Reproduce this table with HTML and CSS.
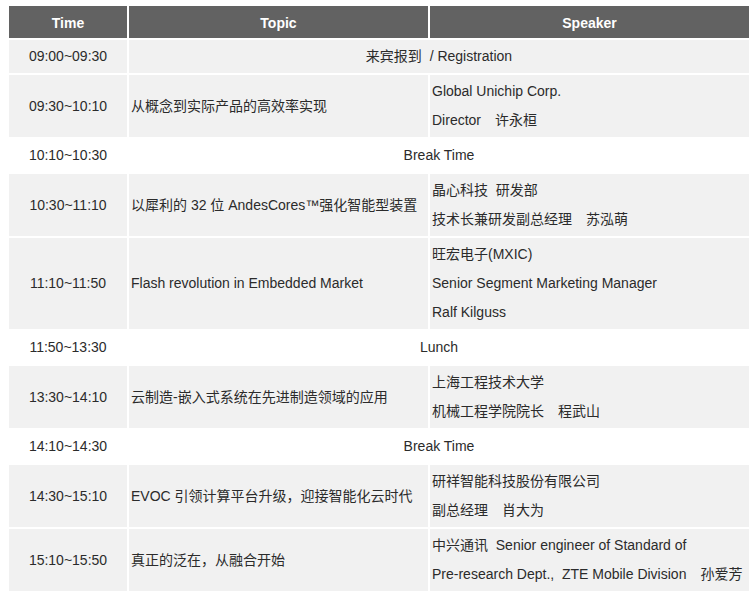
FILE: index.html
```html
<!DOCTYPE html>
<html lang="zh">
<head>
<meta charset="utf-8">
<title>Agenda</title>
<link rel="stylesheet" href="styles.css">
</head>
<body>
<table class="agenda">
  <colgroup>
    <col class="c-time">
    <col class="c-topic">
    <col class="c-speaker">
  </colgroup>
  <thead>
    <tr><th>Time</th><th>Topic</th><th>Speaker</th></tr>
  </thead>
  <tbody>
    <tr class="row">
      <td class="time">09:00~09:30</td>
      <td class="wide" colspan="2"><div class="ln">来宾报到&nbsp; / Registration</div></td>
    </tr>
    <tr class="row">
      <td class="time">09:30~10:10</td>
      <td class="topic">从概念到实际产品的高效率实现</td>
      <td class="speaker"><div class="ln">Global Unichip Corp.</div><div class="ln">Director　许永桓</div></td>
    </tr>
    <tr class="brk">
      <td class="time">10:10~10:30</td>
      <td class="wide" colspan="2">Break Time</td>
    </tr>
    <tr class="row">
      <td class="time">10:30~11:10</td>
      <td class="topic">以犀利的 32 位 AndesCores™强化智能型装置</td>
      <td class="speaker"><div class="ln">晶心科技&nbsp; 研发部</div><div class="ln">技术长兼研发副总经理　苏泓萌</div></td>
    </tr>
    <tr class="row">
      <td class="time">11:10~11:50</td>
      <td class="topic">Flash revolution in Embedded Market</td>
      <td class="speaker"><div class="ln">旺宏电子(MXIC)</div><div class="ln">Senior Segment Marketing Manager</div><div class="ln">Ralf Kilguss</div></td>
    </tr>
    <tr class="brk">
      <td class="time">11:50~13:30</td>
      <td class="wide" colspan="2">Lunch</td>
    </tr>
    <tr class="row">
      <td class="time">13:30~14:10</td>
      <td class="topic">云制造-嵌入式系统在先进制造领域的应用</td>
      <td class="speaker"><div class="ln">上海工程技术大学</div><div class="ln">机械工程学院院长　程武山</div></td>
    </tr>
    <tr class="brk">
      <td class="time">14:10~14:30</td>
      <td class="wide" colspan="2">Break Time</td>
    </tr>
    <tr class="row">
      <td class="time">14:30~15:10</td>
      <td class="topic">EVOC 引领计算平台升级，迎接智能化云时代</td>
      <td class="speaker"><div class="ln">研祥智能科技股份有限公司</div><div class="ln">副总经理　肖大为</div></td>
    </tr>
    <tr class="row">
      <td class="time">15:10~15:50</td>
      <td class="topic">真正的泛在，从融合开始</td>
      <td class="speaker"><div class="ln">中兴通讯&nbsp; Senior engineer of Standard of</div><div class="ln">Pre-research Dept.,&nbsp; ZTE Mobile Division　孙爱芳</div></td>
    </tr>
  </tbody>
</table>
</body>
</html>
```

FILE: styles.css
```css
html, body {
  margin: 0;
  padding: 0;
  background: #ffffff;
}

body {
  padding: 4px 0 0 7px;
  font-family: "Liberation Sans", Arial, "Noto Sans CJK SC", sans-serif;
  font-size: 14px;
  color: #2b2b2b;
}

.agenda {
  border-collapse: separate;
  border-spacing: 2px;
  table-layout: fixed;
  width: 744px;
  margin: 0;
}

.c-time { width: 118px; }
.c-topic { width: 299px; }
.c-speaker { width: 319px; }

.agenda th {
  background: #626262;
  color: #ffffff;
  font-weight: bold;
  font-size: 14px;
  height: 31px;
  padding: 1px 0 0;
  text-align: center;
  vertical-align: middle;
}

.agenda td {
  padding: 2px 0 2px 2px;
  line-height: 29px;
  vertical-align: middle;
  white-space: nowrap;
}

.ln {
  height: 29px;
  overflow: visible;
}

.row td {
  background: #f1f1f1;
}

.brk td {
  background: #ffffff;
  height: 27px;
}

.agenda td.time {
  text-align: center;
  padding-left: 0;
}

.agenda td.wide {
  text-align: center;
  padding-left: 0;
}

.agenda td.speaker {
  padding-left: 2px;
}
```
